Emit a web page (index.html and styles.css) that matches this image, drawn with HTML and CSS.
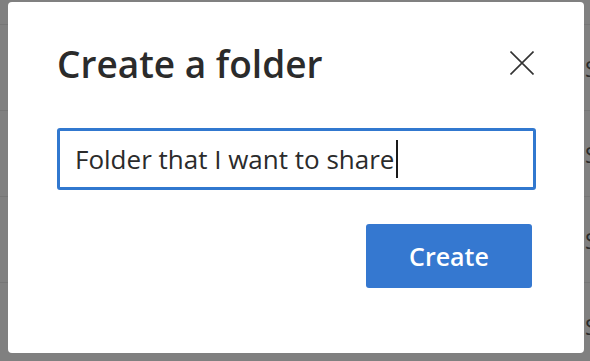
FILE: index.html
```html
<!DOCTYPE html>
<html lang="en">
<head>
    <meta charset="UTF-8">
    <meta name="viewport" content="width=device-width, initial-scale=1.0">
    <title>Create a folder</title>
    <link rel="stylesheet" href="styles.css">
</head>
<body>
    <div class="backdrop">
        <div class="row">Shared</div>
        <div class="row">Shared</div>
        <div class="row">Shared</div>
        <div class="row">Shared</div>
        <div class="row">Shared</div>
    </div>

    <div class="dialog">
        <div class="dialog-header">
            <h1>Create a folder</h1>
            <button class="close-btn" aria-label="Close">
                <svg width="24" height="24" viewBox="0 0 24 24">
                    <path d="M0.5 0.5 L23.5 23.5 M23.5 0.5 L0.5 23.5" stroke="#333" stroke-width="1.6" fill="none"/>
                </svg>
            </button>
        </div>

        <div class="name-field">Folder that I want to share<span class="caret"></span></div>

        <div class="dialog-actions">
            <button class="create-btn">Create</button>
        </div>
    </div>
</body>
</html>
```

FILE: styles.css
```css
body {
    margin: 0;
    height: 361px;
    overflow: hidden;
    font-family: "Open Sans", "Noto Sans", sans-serif;
    background: #808080;
}
.backdrop {
    margin-top: -61px;
}
.row {
    height: 85px;
    border-bottom: 1px solid #767676;
    display: flex;
    align-items: center;
    padding-left: 585px;
    font-size: 22px;
    color: #2b2b2b;
}
.dialog {
    position: absolute;
    left: 8px;
    top: 2px;
    width: 576px;
    height: 351px;
    box-sizing: border-box;
    padding: 36px 49px 0 49px;
    background: white;
    border-radius: 4px;
}
.dialog-header {
    display: flex;
    justify-content: space-between;
    align-items: center;
}
.dialog-header h1 {
    margin: 0;
    font-size: 37px;
    font-weight: 600;
    line-height: 52px;
    color: #2b2b2b;
}
.close-btn {
    background: none;
    border: none;
    padding: 0;
    margin-right: 1px;
    margin-bottom: 2px;
    width: 24px;
    height: 24px;
    cursor: pointer;
}
.close-btn svg {
    display: block;
}
.name-field {
    margin-top: 38px;
    margin-right: -1px;
    height: 62px;
    box-sizing: border-box;
    border: 3px solid #3178cf;
    border-radius: 3px;
    padding-left: 15px;
    display: flex;
    align-items: center;
    font-size: 26px;
    color: #2b2b2b;
}
.caret {
    display: inline-block;
    width: 2px;
    height: 38px;
    margin-left: 2px;
    background: #1a1a1a;
}
.dialog-actions {
    display: flex;
    justify-content: flex-end;
    margin-top: 34px;
    padding-right: 3px;
}
.create-btn {
    width: 166px;
    height: 64px;
    background: #3578d0;
    color: white;
    border: none;
    border-radius: 3px;
    font-family: inherit;
    font-size: 25px;
    font-weight: 600;
    cursor: pointer;
}
```
